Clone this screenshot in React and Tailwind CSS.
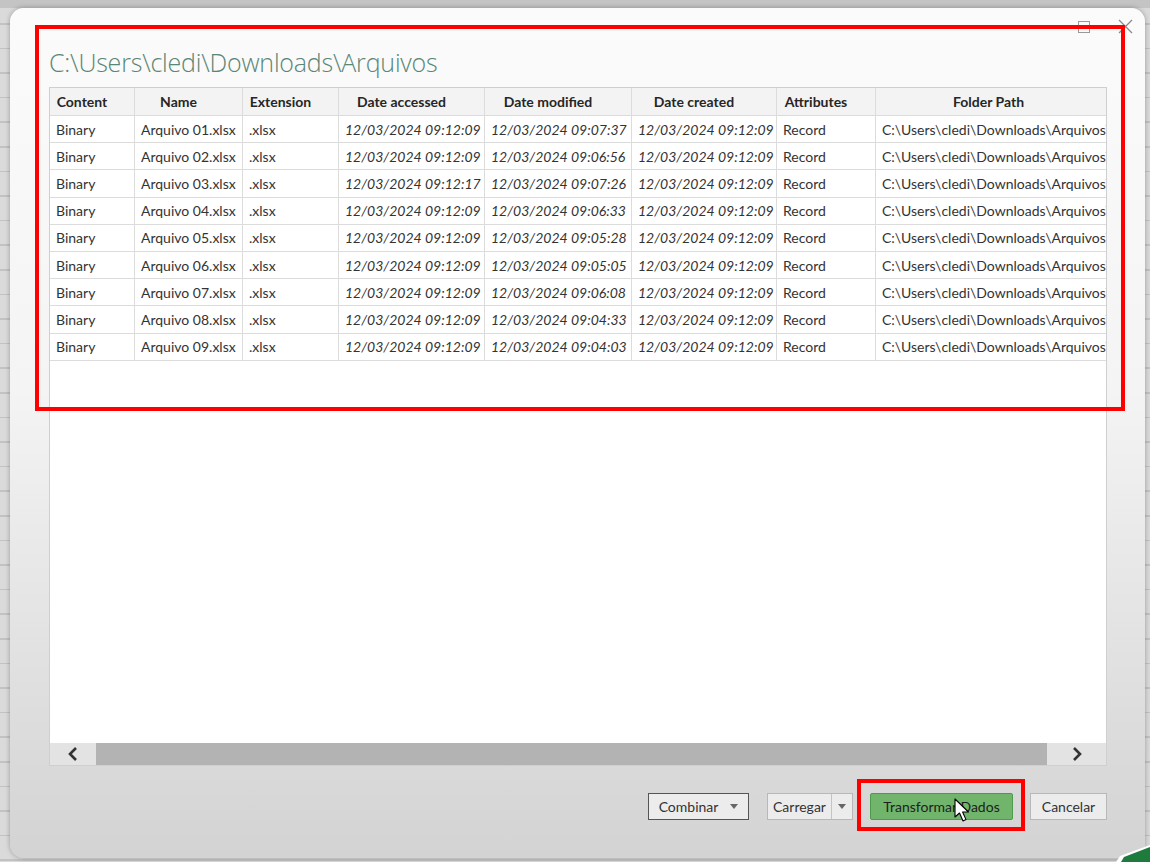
import React from "react";

const columns = [
  { label: "Content", w: "w-[85px]" },
  { label: "Name", w: "w-[108px]" },
  { label: "Extension", w: "w-[96px]" },
  { label: "Date accessed", w: "w-[146px]" },
  { label: "Date modified", w: "w-[147px]" },
  { label: "Date created", w: "w-[145px]" },
  { label: "Attributes", w: "w-[99px]" },
  { label: "Folder Path", w: "w-[246px]" },
];

const rows = [
  ["01", "09:12:09", "09:07:37"],
  ["02", "09:12:09", "09:06:56"],
  ["03", "09:12:17", "09:07:26"],
  ["04", "09:12:09", "09:06:33"],
  ["05", "09:12:09", "09:05:28"],
  ["06", "09:12:09", "09:05:05"],
  ["07", "09:12:09", "09:06:08"],
  ["08", "09:12:09", "09:04:33"],
  ["09", "09:12:09", "09:04:03"],
];

const Cell = ({ w, italic, children }) => (
  <div
    className={`${w} shrink-0 h-full border-r border-[#dcdcdc] px-1.5 flex items-center whitespace-nowrap overflow-hidden ${
      italic ? "italic" : ""
    }`}
  >
    {children}
  </div>
);

const Chevron = ({ dir }) => (
  <svg width="12" height="14" viewBox="0 0 12 14">
    <path
      d={dir === "left" ? "M9 1 L3 7 L9 13" : "M3 1 L9 7 L3 13"}
      fill="none"
      stroke="#333"
      strokeWidth="2.6"
    />
  </svg>
);

const Caret = () => (
  <svg width="8" height="5" viewBox="0 0 8 5">
    <path d="M0 0 L8 0 L4 5 Z" fill="#666" />
  </svg>
);

const App = () => {
  return (
    <div
      className="relative w-[1150px] h-[862px] overflow-hidden bg-[repeating-linear-gradient(to_bottom,#dadada_0px,#dadada_23px,#c2c2c2_23px,#c2c2c2_24.6px)]"
      style={{ fontFamily: "Lato, 'Open Sans', sans-serif" }}
    >
      <div className="h-2 bg-[#c4c4c4]" />
      <div className="pl-2.5 pr-[5px]">
        <div className="relative h-[850px] rounded-[14px] bg-[linear-gradient(to_bottom,#fbfbfb,#f4f4f4_45%,#d3d3d3)] shadow-[0_0_5px_rgba(0,0,0,0.3)] pl-[39px] pr-[38px] pt-[38px]">
          {/* window controls */}
          <div className="absolute top-[11px] right-[12px] flex items-center gap-[28px]">
            <div className="w-[12px] h-[12px] border border-[#999]" />
            <svg width="15" height="15" viewBox="0 0 15 15">
              <path d="M1 1 L14 14 M14 1 L1 14" stroke="#8a8a8a" strokeWidth="1.3" />
            </svg>
          </div>

          <div
            className="text-[25px] font-light text-[#5a8676] leading-[32px] tracking-[-0.2px]"
            style={{ fontFamily: "'Open Sans', sans-serif" }}
          >
            C:\Users\cledi\Downloads\Arquivos
          </div>

          <div className="mt-[9px] w-[1058px] h-[679px] border border-[#cfcfcf] bg-white flex flex-col overflow-hidden">
            <div className="flex-1 overflow-hidden">
              <div className="flex h-[28px] bg-[#f3f3f3] border-b border-[#dcdcdc] text-[14px] font-bold text-[#262626]">
                {columns.map((c) => (
                  <div
                    key={c.label}
                    className={`${c.w} shrink-0 h-full border-r border-[#dcdcdc] pr-5 flex items-center justify-center whitespace-nowrap`}
                  >
                    {c.label}
                  </div>
                ))}
              </div>
              {rows.map(([n, acc, mod]) => (
                <div
                  key={n}
                  className="flex h-[27.2px] border-b border-[#dcdcdc] text-[14px] text-[#333]"
                >
                  <Cell w="w-[85px]">Binary</Cell>
                  <Cell w="w-[108px]">Arquivo {n}.xlsx</Cell>
                  <Cell w="w-[96px]">.xlsx</Cell>
                  <Cell w="w-[146px]" italic>
                    12/03/2024 {acc}
                  </Cell>
                  <Cell w="w-[147px]" italic>
                    12/03/2024 {mod}
                  </Cell>
                  <Cell w="w-[145px]" italic>
                    12/03/2024 09:12:09
                  </Cell>
                  <Cell w="w-[99px]">Record</Cell>
                  <Cell w="w-[246px]">C:\Users\cledi\Downloads\Arquivos\</Cell>
                </div>
              ))}
            </div>
            <div className="h-[22px] flex bg-[#e3e3e3]">
              <div className="w-[46px] flex items-center justify-center">
                <Chevron dir="left" />
              </div>
              <div className="w-[951px] bg-[#b3b3b3]" />
              <div className="flex-1 flex items-center justify-center">
                <Chevron dir="right" />
              </div>
            </div>
          </div>

          <div className="mt-[27px] w-[1058px] flex justify-end items-center text-[14px] text-[#333]">
            <button className="h-[27px] w-[101px] border border-[#555] bg-[#ececec] flex items-center justify-center gap-3">
              Combinar <Caret />
            </button>
            <div className="ml-[18px] h-[27px] w-[86px] border border-[#b8b8b8] bg-[#ececec] flex">
              <div className="w-[64px] border-r border-[#c4c4c4] flex items-center justify-center">
                Carregar
              </div>
              <div className="flex-1 flex items-center justify-center">
                <Caret />
              </div>
            </div>
            <button className="ml-[17px] h-[27px] w-[143px] rounded-[2px] border border-[#4f9a4d] bg-[#70b56b] text-[#1e1e1e] flex items-center justify-center">
              Transformar Dados
            </button>
            <button className="ml-[17px] h-[27px] w-[77px] border border-[#b8b8b8] bg-[#ececec] flex items-center justify-center">
              Cancelar
            </button>
          </div>
        </div>
      </div>

      {/* annotations */}
      <div className="absolute left-[35px] top-[25px] w-[1090px] h-[386px] border-4 border-[#ff0000]" />
      <div className="absolute left-[857px] top-[779px] w-[168px] h-[52px] border-4 border-[#ff0000]" />

      {/* mouse cursor */}
      <svg className="absolute left-[954px] top-[798px]" width="16" height="26" viewBox="0 0 16 26">
        <path
          d="M1 1 L1 19 L5.5 15 L9 23 L12 21.6 L8.6 14 L14.5 14 Z"
          fill="#fff"
          stroke="#000"
          strokeWidth="1.1"
          strokeLinejoin="round"
        />
      </svg>

      {/* excel logo corner */}
      <svg className="absolute right-0 bottom-0" width="34" height="20" viewBox="0 0 34 20">
        <path d="M0 20 L4 14 L34 3 L34 20 Z" fill="#fff" />
        <path d="M5 20 L8 15 L34 5 L34 20 Z" fill="#1f7a3e" />
      </svg>
    </div>
  );
};

export default App;
